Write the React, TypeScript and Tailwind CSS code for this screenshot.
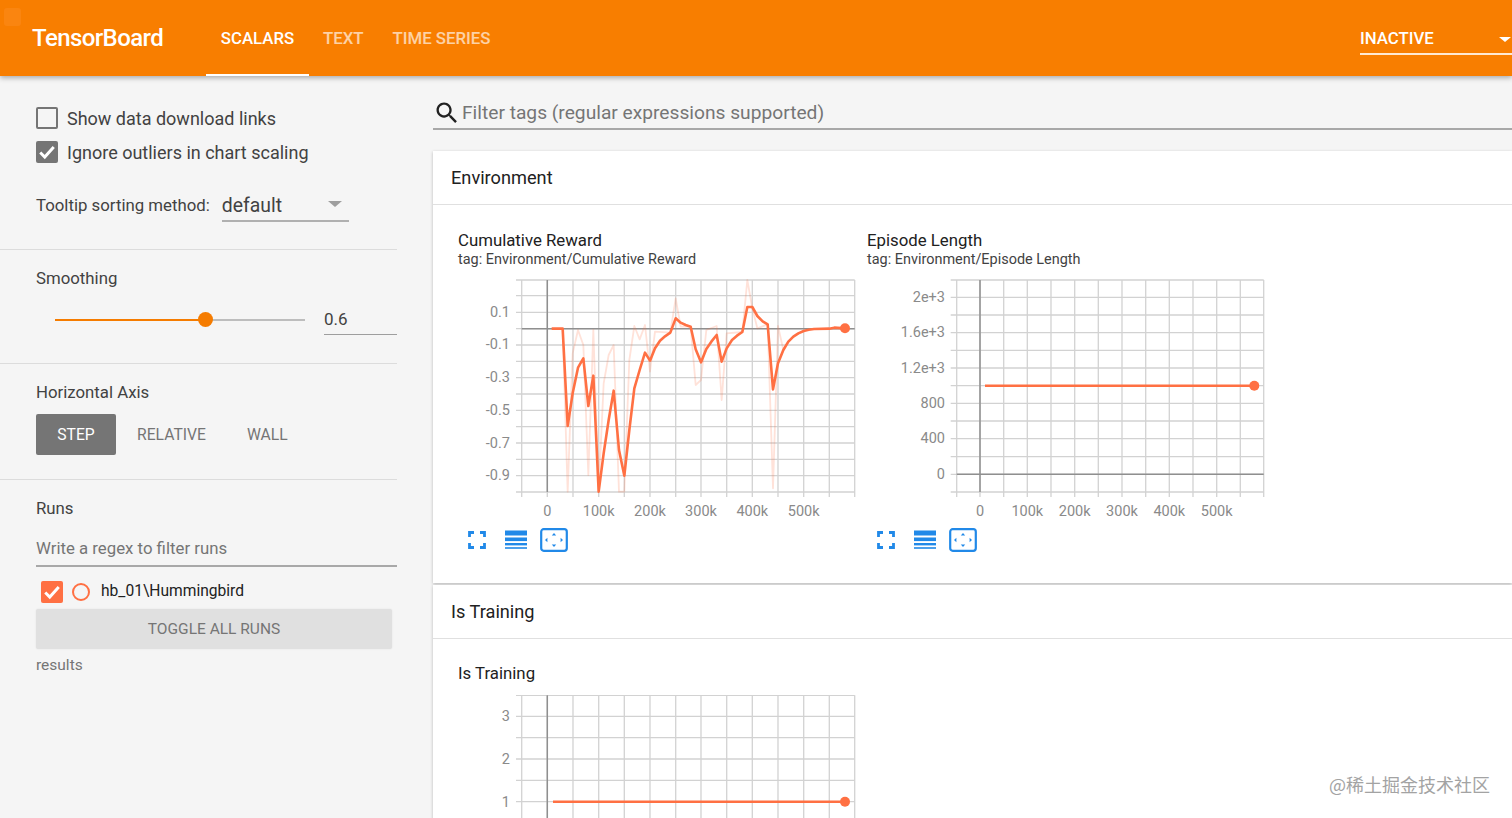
import React from "react"

const ORANGE = "#ff7043"

type ChartProps = {
  ox: number
  oy: number
  width: number
  height: number
  vs: number[]
  hs: number[]
  darkV: number
  darkH?: number
  hStart: number
  vEnd: number
  xLabels: [string, number][]
  yLabels: [string, number][]
  labelRight: number
  line: [number, number][]
  raw?: [number, number][]
  dot: [number, number]
}

function toPoints(pts: [number, number][], ox: number, oy: number) {
  return pts.map(([x, y]) => `${x - ox},${y - oy}`).join(" ")
}

// zoomed crop coords back to page coords
function fromCrop(pts: [number, number][], cx: number, cy: number): [number, number][] {
  return pts.map(([x, y]) => [x / 3 + cx, y / 3 + cy])
}

function Chart({ ox, oy, width, height, vs, hs, darkV, darkH, hStart, vEnd, xLabels, yLabels, labelRight, line, raw, dot }: ChartProps) {
  const right = vs[vs.length - 1]
  const top = hs[0]
  return (
    <svg width={width} height={height} className="block">
      {vs.map((x) => (
        <line key={x} x1={x - ox} x2={x - ox} y1={top - oy} y2={vEnd - oy} stroke="#d2d2d2" strokeWidth="1.3" />
      ))}
      {hs.map((y) => (
        <line key={y} x1={hStart - ox} x2={right - ox} y1={y - oy} y2={y - oy} stroke="#d2d2d2" strokeWidth="1.3" />
      ))}
      <line x1={darkV - ox} x2={darkV - ox} y1={top - oy} y2={hs[hs.length - 1] - oy} stroke="#8f8f8f" strokeWidth="1.5" />
      {darkH !== undefined && (
        <line x1={vs[0] - ox} x2={right - ox} y1={darkH - oy} y2={darkH - oy} stroke="#8f8f8f" strokeWidth="1.5" />
      )}
      {raw && <polyline points={toPoints(raw, ox, oy)} fill="none" stroke={ORANGE} strokeOpacity="0.2" strokeWidth="1.8" strokeLinejoin="round" />}
      <polyline points={toPoints(line, ox, oy)} fill="none" stroke={ORANGE} strokeWidth="2.6" strokeLinejoin="round" />
      <circle cx={dot[0] - ox} cy={dot[1] - oy} r="5" fill={ORANGE} />
      {yLabels.map(([t, y]) => (
        <text key={t} x={labelRight - ox} y={y - oy + 5} textAnchor="end" fontSize="14.5" fill="#8a8a8a">
          {t}
        </text>
      ))}
      {xLabels.map(([t, x]) => (
        <text key={t} x={x - ox} y={516 - oy} textAnchor="middle" fontSize="14.5" fill="#8a8a8a">
          {t}
        </text>
      ))}
    </svg>
  )
}

function ChartIcons() {
  return (
    <div className="flex items-center mt-[9px] ml-[9px] h-[22px] text-[#2189e8]">
      <svg width="20" height="20" viewBox="0 0 20 20" fill="none" stroke="currentColor" strokeWidth="2.8">
        <path d="M2.5 7V2.5H7M13 2.5h4.5V7M17.5 13v4.5H13M7 17.5H2.5V13" />
      </svg>
      <svg width="24" height="20" viewBox="0 0 24 20" className="ml-[17px]" fill="currentColor">
        <rect x="1" y="0.5" width="22" height="5" />
        <rect x="1" y="7.5" width="22" height="3.6" />
        <rect x="1" y="13" width="22" height="2.4" />
        <rect x="1" y="17.2" width="22" height="1.6" />
      </svg>
      <svg width="28" height="24" viewBox="0 0 28 24" className="ml-[12px]" fill="none">
        <rect x="1.2" y="1.2" width="25.6" height="21.6" rx="2.5" stroke="currentColor" strokeWidth="2.2" />
        <path d="M14 5l2.2 2.4h-4.4zM14 19l-2.2-2.4h4.4zM5 12l2.4-2.2v4.4zM23 12l-2.4 2.2V9.800z" fill="currentColor" />
      </svg>
    </div>
  )
}

const crVs = [521.7, 547.3, 573, 598.7, 624.3, 650, 675.7, 701, 726.7, 752.3, 778, 803.7, 829.3, 854.7]
const crHs = [280, 295.7, 312.3, 328.7, 345, 361.3, 377.7, 394, 410.3, 426.7, 443, 459.3, 475.7, 492]

const crLine = fromCrop(
  [
    [305, 326], [338, 326], [353, 618], [368, 520], [384, 443], [400, 415], [415, 558], [430, 467],
    [446, 815], [461, 700], [476, 600], [491, 512], [507, 690], [523, 767], [538, 630], [553, 505],
    [569, 450], [585, 398], [600, 422], [615, 385], [630, 362], [645, 349], [661, 338], [677, 295],
    [692, 308], [707, 315], [722, 320], [737, 388], [753, 427], [769, 387], [784, 365], [800, 345],
    [815, 425], [830, 385], [846, 360], [861, 347], [877, 336], [892, 261], [907, 261], [922, 288],
    [938, 304], [953, 313], [969, 508], [984, 430], [1000, 390], [1015, 365], [1030, 350], [1045, 340],
    [1061, 333], [1076, 329], [1092, 327], [1138, 326], [1153, 323], [1184, 325],
  ],
  450,
  220,
)

const crRaw = fromCrop(
  [
    [338, 326], [353, 815], [368, 400], [384, 330], [400, 375], [415, 765], [430, 330], [446, 815],
    [461, 490], [476, 405], [491, 375], [507, 815], [523, 815], [538, 420], [553, 318], [569, 358],
    [585, 315], [600, 455], [615, 335], [661, 338], [677, 235], [692, 320], [722, 320], [737, 495],
    [753, 480], [769, 330], [800, 318], [815, 540], [830, 340], [877, 336], [892, 180], [907, 265],
    [922, 325], [953, 313], [969, 805], [984, 318], [1000, 390],
  ],
  450,
  220,
)

export default function App() {
  return (
    <div className="relative h-screen overflow-hidden bg-[#f5f5f5] font-['Roboto',sans-serif] text-[#212121]">
      {/* Header */}
      <header className="relative z-10 flex h-[76px] items-center bg-[#f87e00] pt-[1px] text-white shadow-[0_2px_5px_rgba(0,0,0,0.3)]">
        <div className="absolute left-[4px] top-[8px] h-[18px] w-[17px] rounded-[3px] bg-[#fa8510]" />
        <div className="mb-[2px] ml-[32px] w-[174px] text-[24px] font-medium tracking-[-0.6px]">TensorBoard</div>
        <div className="relative flex h-full w-[103px] items-center justify-center text-[16.8px] font-medium">
          SCALARS
          <span className="absolute bottom-0 left-0 h-[2.5px] w-full bg-white" />
        </div>
        <div className="ml-[14px] text-[16.8px] font-medium text-white/65">TEXT</div>
        <div className="ml-[29px] text-[16.8px] font-medium text-white/65">TIME SERIES</div>
        <div className="relative ml-auto mt-[7px] flex h-[26px] w-[152px] items-center border-b-2 border-[#ffe9d2] pb-[5px] text-[16.8px] font-medium">
          INACTIVE
          <span className="absolute right-[1px] top-[8px] h-0 w-0 border-x-[6px] border-t-[5px] border-x-transparent border-t-white" />
        </div>
      </header>

      <div className="flex h-[742px]">
        {/* Sidebar */}
        <aside className="w-[433px] shrink-0 text-[16.8px] text-[#424242]">
          <section className="mr-[36px] h-[174px] border-b border-[#dcdcdc] pl-[36px] pt-[31px]">
            <label className="flex h-[22px] items-center text-[18px]">
              <span className="mr-[9px] h-[22px] w-[22px] rounded-[2px] border-2 border-[#757575]" />
              <span>Show data download links</span>
            </label>
            <label className="mt-[12px] flex h-[22px] items-center text-[18px]">
              <span className="mr-[9px] flex h-[22px] w-[22px] items-center justify-center rounded-[2px] bg-[#757575]">
                <svg width="18" height="18" viewBox="0 0 16 16" fill="none" stroke="#fff" strokeWidth="2.6">
                  <path d="M2 8.500l4 4 8-9" />
                </svg>
              </span>
              <span>Ignore outliers in chart scaling</span>
            </label>
            <div className="mt-[26px] flex items-center">
              <span>Tooltip sorting method:</span>
              <div className="relative ml-[12px] h-[33px] w-[127px] border-b-2 border-[#b0b0b0] pt-[3px] text-[19.4px] leading-[27px]">
                default
                <span className="absolute right-[7px] top-[12px] h-0 w-0 border-x-[7px] border-t-[6px] border-x-transparent border-t-[#9e9e9e]" />
              </div>
            </div>
          </section>

          <section className="mr-[36px] h-[114px] border-b border-[#dcdcdc] pl-[36px] pt-[16px]">
            <div className="h-[24px] leading-[24px]">Smoothing</div>
            <div className="mt-[19px] flex h-[33px] items-start">
              <div className="relative ml-[19px] mt-[10px] h-[2px] w-[250px] bg-[#bdbdbd]">
                <div className="h-full w-[150px] bg-[#f57c00]" />
                <span className="absolute left-[143px] top-[-7px] h-[15px] w-[15px] rounded-full bg-[#f57c00]" />
              </div>
              <div className="ml-[19px] h-[26px] w-[73px] border-b border-[#9e9e9e] text-[17px] leading-[20px]">0.6</div>
            </div>
          </section>

          <section className="mr-[36px] h-[116px] border-b border-[#dcdcdc] pl-[36px] pt-[16px]">
            <div className="h-[24px] leading-[24px]">Horizontal Axis</div>
            <div className="mt-[10px] flex h-[41px] items-center text-[15.7px]">
              <div className="flex h-[41px] w-[80px] items-center justify-center rounded-[2px] bg-[#757575] pt-[1px] text-white">STEP</div>
              <span className="ml-[21px] pt-[1px] text-[#757575]">RELATIVE</span>
              <span className="ml-[41px] pt-[1px] text-[#757575]">WALL</span>
            </div>
          </section>

          <section className="pl-[36px] pt-[16px]">
            <div className="h-[24px] leading-[24px]">Runs</div>
            <div className="mt-[14px] mr-[36px] h-[33px] border-b-2 border-[#a8a8a8] leading-[28px] text-[#757575]">
              Write a regex to filter runs
            </div>
            <div className="mt-[14px] flex h-[22px] items-center">
              <span className="ml-[5px] flex h-[22px] w-[22px] items-center justify-center rounded-[2px] bg-[#ff7043]">
                <svg width="18" height="18" viewBox="0 0 16 16" fill="none" stroke="#fff" strokeWidth="2.6">
                  <path d="M2 8.500l4 4 8-9" />
                </svg>
              </span>
              <span className="ml-[9px] h-[18px] w-[18px] rounded-full border-2 border-[#ff7043]" />
              <span className="ml-[11px] text-[15.6px] text-[#212121]">hb_01\Hummingbird</span>
            </div>
            <div className="mt-[6px] flex h-[40px] w-[356px] items-center justify-center rounded-[2px] bg-[#e0e0e0] pt-[1px] text-[15.5px] text-[#757575] shadow-[0_0_2px_rgba(0,0,0,0.08)]">
              TOGGLE ALL RUNS
            </div>
            <div className="mt-[5px] text-[15.5px] text-[#757575]">results</div>
          </section>
        </aside>

        {/* Main */}
        <main className="min-w-0 flex-1">
          <div className="flex h-[54px] items-center border-b-2 border-[#a8a8a8] pt-[22px]">
            <svg width="28" height="28" viewBox="0 0 24 24" className="shrink-0" fill="#212121">
              <path d="M15.5 14h-.79l-.28-.27C15.41 12.59 16 11.11 16 9.5 16 5.91 13.09 3 9.5 3S3 5.91 3 9.5 5.91 16 9.5 16c1.61 0 3.09-.59 4.23-1.57l.27.28v.79l5 4.99L20.49 19l-4.99-5zm-6 0C7.01 14 5 11.99 5 9.5S7.01 5 9.5 5 14 7.01 14 9.5 11.99 14 9.5 14z" />
            </svg>
            <span className="ml-[1px] text-[19.2px] text-[#757575]">Filter tags (regular expressions supported)</span>
          </div>

          <div className="mt-[21px] h-[432px] bg-white shadow-[0_1px_3px_rgba(0,0,0,0.25)]">
            <div className="flex h-[54px] items-center border-b border-[#e0e0e0] pl-[18px] pt-[1px] text-[18.2px] text-[#212121]">Environment</div>
            <div className="flex pl-[25px] pt-[25px]">
              <div className="w-[409px]">
                <div className="h-[21px] text-[16.8px] leading-[21px] text-[#212121]">Cumulative Reward</div>
                <div className="h-[20px] text-[14.45px] leading-[18px] text-[#424242]">tag: Environment/Cumulative Reward</div>
                <div className="mt-[8px]">
                  <Chart
                    ox={458}
                    oy={279}
                    width={400}
                    height={241}
                    vs={crVs}
                    hs={crHs}
                    darkV={547.3}
                    darkH={328.7}
                    hStart={516}
                    vEnd={497}
                    labelRight={510}
                    xLabels={[["0", 547.3], ["100k", 598.7], ["200k", 650], ["300k", 701], ["400k", 752.3], ["500k", 803.7]]}
                    yLabels={[["0.1", 312], ["-0.1", 344], ["-0.3", 377], ["-0.5", 410], ["-0.7", 443], ["-0.9", 475]]}
                    line={crLine}
                    raw={crRaw}
                    dot={[845, 328.3]}
                  />
                </div>
                <ChartIcons />
              </div>
              <div className="w-[409px]">
                <div className="h-[21px] text-[16.8px] leading-[21px] text-[#212121]">Episode Length</div>
                <div className="h-[20px] text-[14.45px] leading-[18px] text-[#424242]">tag: Environment/Episode Length</div>
                <div className="mt-[8px]">
                  <Chart
                    ox={867}
                    oy={279}
                    width={400}
                    height={241}
                    vs={[956.7, 980, 1003.7, 1027.3, 1051, 1074.7, 1098.3, 1122, 1145.7, 1169.3, 1193, 1216.7, 1240.3, 1263.7]}
                    hs={[280, 297.3, 315, 332.7, 350.3, 368, 385.7, 403.3, 421, 438.7, 456.7, 474.3, 492]}
                    darkV={980}
                    darkH={474.3}
                    hStart={950.7}
                    vEnd={497}
                    labelRight={945}
                    xLabels={[["0", 980], ["100k", 1027.3], ["200k", 1074.7], ["300k", 1122], ["400k", 1169.3], ["500k", 1216.7]]}
                    yLabels={[["2e+3", 297], ["1.6e+3", 332], ["1.2e+3", 368], ["800", 403], ["400", 438], ["0", 474]]}
                    line={[[985, 385.7], [1254, 385.7]]}
                    dot={[1254.3, 385.7]}
                  />
                </div>
                <ChartIcons />
              </div>
            </div>
          </div>

          <div className="mt-[2px] h-[300px] bg-white shadow-[0_1px_3px_rgba(0,0,0,0.25)]">
            <div className="flex h-[54px] items-center border-b border-[#e0e0e0] pl-[18px] text-[18.2px] text-[#212121]">Is Training</div>
            <div className="pl-[25px] pt-[24px]">
              <div className="h-[21px] text-[16.8px] leading-[21px] text-[#212121]">Is Training</div>
              <div className="mt-[11px]">
                <Chart
                  ox={458}
                  oy={695}
                  width={400}
                  height={124}
                  vs={crVs}
                  hs={[695.3, 716.3, 737.7, 759, 780.3, 801.7, 823]}
                  darkV={547.3}
                  hStart={516}
                  vEnd={830}
                  labelRight={510}
                  xLabels={[]}
                  yLabels={[["3", 716], ["2", 759], ["1", 801.7]]}
                  line={[[553, 801.7], [845, 801.7]]}
                  dot={[845, 801.7]}
                />
              </div>
            </div>
          </div>
        </main>
      </div>

      {/* Watermark */}
      <div className="absolute left-[1329px] top-[772px] font-['Noto_Sans_CJK_SC',sans-serif] text-[18px] leading-[24px] text-[#a3a3a3]">
        @稀土掘金技术社区
      </div>
    </div>
  )
}
